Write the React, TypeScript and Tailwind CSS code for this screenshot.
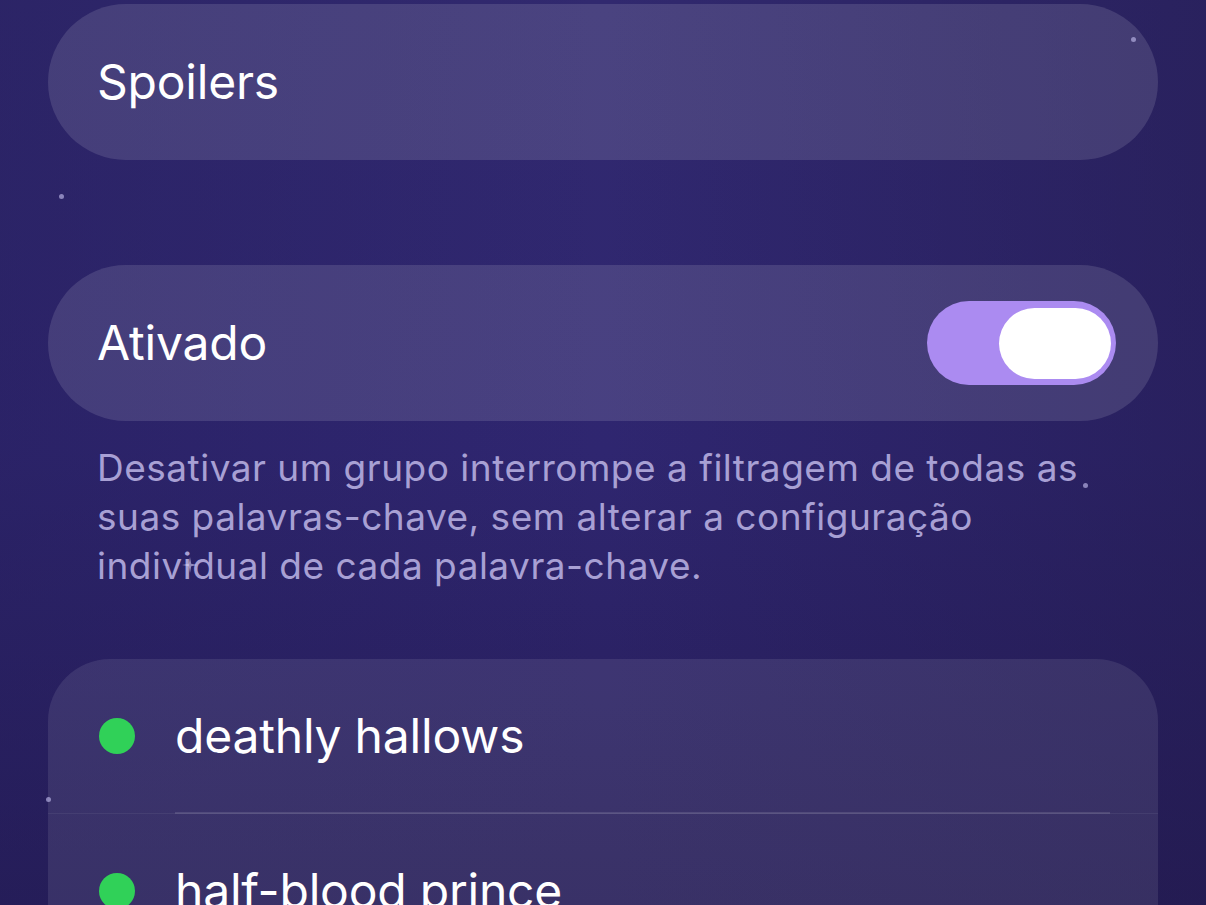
import React from "react";

function Dot({ x, y, s = 5 }: { x: number; y: number; s?: number }) {
  return (
    <div
      className="absolute rounded-full bg-[#b4aee0]/70"
      style={{ left: x, top: y, width: s, height: s }}
    />
  );
}

export default function App() {
  return (
    <div
      className="relative w-[1206px] h-[905px] overflow-hidden bg-gradient-to-b from-[#31296f] via-[#2f2670] to-[#261d58] text-white"
      style={{ fontFamily: "Inter, 'Noto Sans', sans-serif" }}
    >
      <div className="absolute inset-0 bg-gradient-to-r from-[#241d5a]/40 via-transparent to-[#221a4d]/50" />
      <div className="relative px-[48px] pt-[4px] flex flex-col">
        <div className="h-[156px] rounded-full bg-white/[0.12] flex items-center px-[49px]">
          <span className="text-[48px] leading-none tracking-[-0.2px]">Spoilers</span>
        </div>

        <div className="mt-[105px] h-[156px] rounded-full bg-white/[0.12] flex items-center justify-between pl-[49px] pr-[42px]">
          <span className="text-[48px] leading-none tracking-[-0.2px]">Ativado</span>
          <div className="w-[189px] h-[84px] rounded-full bg-[#ab8bf1] flex items-center justify-end pr-[5px]">
            <div className="w-[112px] h-[71px] rounded-full bg-white" />
          </div>
        </div>

        <p className="mt-[22px] px-[49px] text-[37px] leading-[49px] text-[#a8a0d4] tracking-[0.5px]">
          Desativar um grupo interrompe a filtragem de todas as suas palavras-chave, sem alterar a configuração individual de cada palavra-chave.
        </p>

        <div className="mt-[69px] rounded-t-[62px] bg-white/[0.09] flex flex-col">
          <div className="h-[154px] flex items-center pl-[51px]">
            <div className="w-[36px] h-[36px] rounded-full bg-[#30d158]" />
            <span className="ml-[40px] text-[48px] leading-none tracking-[-0.2px]">deathly hallows</span>
          </div>
          <div className="h-px bg-white/[0.06] relative">
            <div className="absolute left-[127px] right-[48px] top-[-1px] h-[2px] bg-white/[0.12]" />
          </div>
          <div className="h-[154px] flex items-center pl-[51px]">
            <div className="w-[36px] h-[36px] rounded-full bg-[#30d158]" />
            <span className="ml-[40px] text-[48px] leading-none tracking-[-0.2px]">half-blood prince</span>
          </div>
        </div>
      </div>

      <Dot x={1131} y={37} s={5} />
      <Dot x={59} y={194} s={5} />
      <Dot x={1083} y={483} s={5} />
      <Dot x={46} y={797} s={5} />
      <svg className="absolute left-[182px] top-[557px]" width="16" height="16" viewBox="0 0 16 16">
        <path d="M8 0 L9.2 6.8 L16 8 L9.2 9.2 L8 16 L6.8 9.2 L0 8 L6.8 6.8 Z" fill="#d6d0f5" opacity="0.6" />
      </svg>
    </div>
  );
}
